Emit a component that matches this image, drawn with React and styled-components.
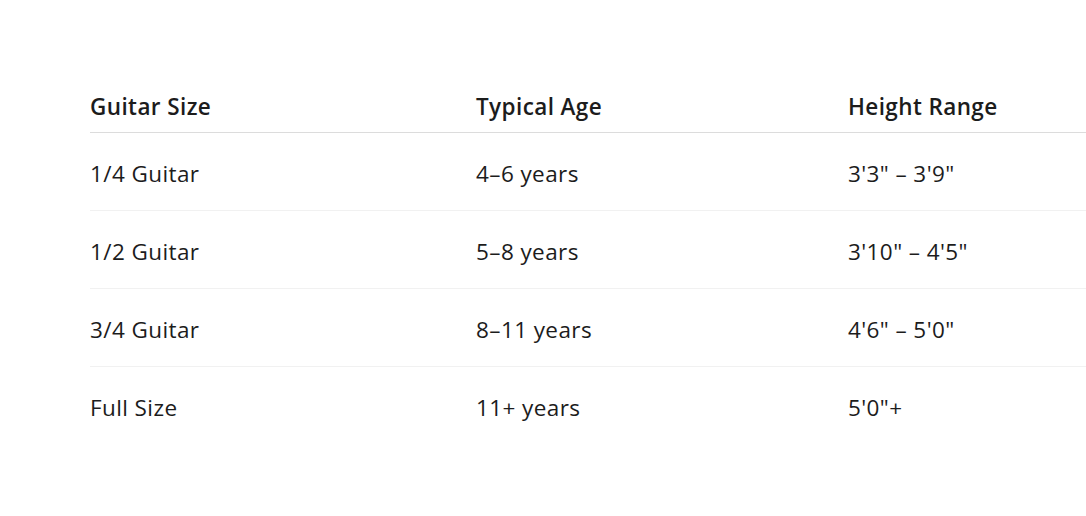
import React from "react";
import styled, { createGlobalStyle } from "styled-components";

const GlobalStyle = createGlobalStyle`
  html, body {
    margin: 0;
    padding: 0;
    background: #ffffff;
    overflow: hidden;
  }
  body {
    font-family: "Open Sans", "Noto Sans", "Liberation Sans", sans-serif;
    color: #1c1c1c;
  }
`;

const Page = styled.div`
  width: 1086px;
  height: 516px;
  padding: 80px 0 0 90px;
  box-sizing: border-box;
  overflow: hidden;
`;

const Table = styled.table`
  width: 1100px;
  border-collapse: collapse;
  table-layout: fixed;
`;

const Th = styled.th`
  width: ${(p) => p.$w || "auto"};
  text-align: left;
  font-size: 22.5px;
  font-weight: 600;
  letter-spacing: 0.4px;
  height: 52px;
  padding: 0;
  vertical-align: middle;
  border-bottom: 1px solid #dcdcdc;
`;

const Tr = styled.tr`
  & + & td {
    border-top: 1px solid #f1f1f1;
  }
`;

const Td = styled.td`
  font-size: 22.5px;
  font-weight: 400;
  letter-spacing: 0.4px;
  height: 73px;
  padding: 4px 0 0;
  vertical-align: middle;
`;

const rows = [
  ["1/4 Guitar", "4–6 years", "3'3\" – 3'9\""],
  ["1/2 Guitar", "5–8 years", "3'10\" – 4'5\""],
  ["3/4 Guitar", "8–11 years", "4'6\" – 5'0\""],
  ["Full Size", "11+ years", "5'0\"+"],
];

export default function App() {
  return (
    <>
      <GlobalStyle />
      <Page>
        <Table>
          <thead>
            <tr>
              <Th $w="386px">Guitar Size</Th>
              <Th $w="372px">Typical Age</Th>
              <Th>Height Range</Th>
            </tr>
          </thead>
          <tbody>
            {rows.map((r) => (
              <Tr key={r[0]}>
                <Td>{r[0]}</Td>
                <Td>{r[1]}</Td>
                <Td>{r[2]}</Td>
              </Tr>
            ))}
          </tbody>
        </Table>
      </Page>
    </>
  );
}
